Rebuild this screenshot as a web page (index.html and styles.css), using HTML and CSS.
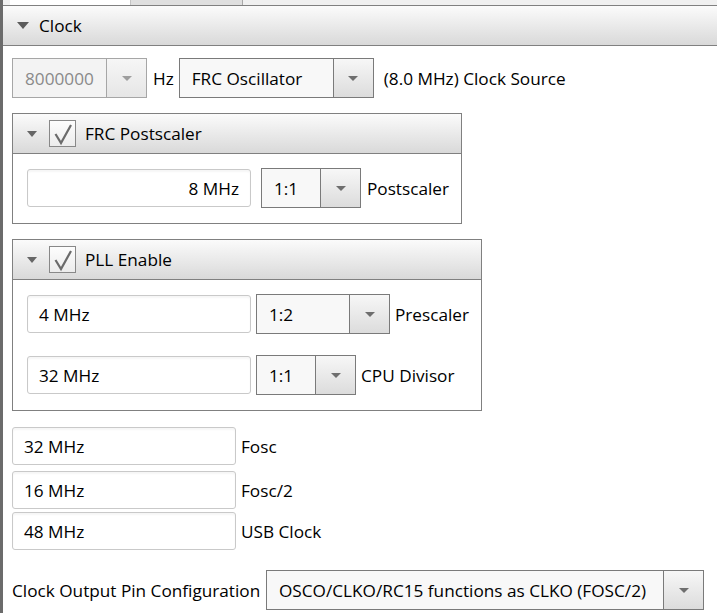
FILE: index.html
```html
<!DOCTYPE html>
<html>
<head>
<meta charset="utf-8">
<link rel="stylesheet" href="styles.css">
</head>
<body>
<div class="app">
  <div class="tabs">
    <div class="tab tab-active"></div>
    <div class="tab tab-inactive"></div>
  </div>
  <div class="section-head">
    <span class="tri tri-lg"></span>
    <span class="head-title">Clock</span>
  </div>
  <div class="content">
    <div class="row row-first">
      <div class="combo combo-disabled cw-135">
        <span class="combo-text">8000000</span>
        <span class="combo-btn"><span class="arrow"></span></span>
      </div>
      <span class="label ml-6">Hz</span>
      <div class="combo cw-195 ml-5">
        <span class="combo-text">FRC Oscillator</span>
        <span class="combo-btn"><span class="arrow"></span></span>
      </div>
      <span class="label ml-10">(8.0 MHz) Clock Source</span>
    </div>

    <div class="panel panel-frc">
      <div class="panel-head">
        <span class="tri tri-sm"></span>
        <span class="check"><svg width="27" height="27" viewBox="0 0 27 27"><path d="M6.5 14 L12 23 L22 5" fill="none" stroke="#6b6b6b" stroke-width="2.2"/></svg></span>
        <span class="panel-title">FRC Postscaler</span>
      </div>
      <div class="panel-body">
        <div class="row">
          <div class="field field-right">8 MHz</div>
          <div class="combo cw-100 ml-10">
            <span class="combo-text">1:1</span>
            <span class="combo-btn"><span class="arrow"></span></span>
          </div>
          <span class="label ml-6">Postscaler</span>
        </div>
      </div>
    </div>

    <div class="panel panel-pll">
      <div class="panel-head">
        <span class="tri tri-sm"></span>
        <span class="check"><svg width="27" height="27" viewBox="0 0 27 27"><path d="M6.5 14 L12 23 L22 5" fill="none" stroke="#6b6b6b" stroke-width="2.2"/></svg></span>
        <span class="panel-title">PLL Enable</span>
      </div>
      <div class="panel-body">
        <div class="row">
          <div class="field">4 MHz</div>
          <div class="combo cw-134 ml-5">
            <span class="combo-text">1:2</span>
            <span class="combo-btn"><span class="arrow"></span></span>
          </div>
          <span class="label ml-5">Prescaler</span>
        </div>
        <div class="row row-second">
          <div class="field">32 MHz</div>
          <div class="combo cw-100 ml-5">
            <span class="combo-text">1:1</span>
            <span class="combo-btn"><span class="arrow"></span></span>
          </div>
          <span class="label ml-5">CPU Divisor</span>
        </div>
      </div>
    </div>

    <div class="outputs">
      <div class="row out-row">
        <div class="field">32 MHz</div>
        <span class="label ml-5">Fosc</span>
      </div>
      <div class="row out-row out-row-2">
        <div class="field">16 MHz</div>
        <span class="label ml-5">Fosc/2</span>
      </div>
      <div class="row out-row out-row-3">
        <div class="field">48 MHz</div>
        <span class="label ml-5">USB Clock</span>
      </div>
    </div>

    <div class="row row-last">
      <span class="label label-pin">Clock Output Pin Configuration</span>
      <div class="combo cw-438">
        <span class="combo-text">OSCO/CLKO/RC15 functions as CLKO (FOSC/2)</span>
        <span class="combo-btn"><span class="arrow"></span></span>
      </div>
    </div>
  </div>
</div>
</body>
</html>
```
FILE: styles.css
```css
html, body {
  margin: 0;
  padding: 0;
  background: #ffffff;
  overflow: hidden;
}

.app {
  box-sizing: border-box;
  min-height: 613px;
  border-left: 3px solid #6b6b6b;
  font-family: "Open Sans", "Noto Sans", sans-serif;
  font-size: 17.2px;
  color: #000;
}

.tabs {
  display: flex;
  height: 5px;
  background: #f0f0f0;
}
.tab-active {
  margin-left: 7px;
  width: 120px;
  background: #ffffff;
  border-right: 1px solid #c4c4c4;
}
.tab-inactive {
  width: 111px;
  background: #dfdfdf;
  border-right: 1px solid #a8a8a8;
}

.section-head {
  display: flex;
  align-items: center;
  height: 39px;
  padding-left: 14px;
  border-top: 1px solid #808080;
  border-bottom: 1px solid #808080;
  background: linear-gradient(#fbfbfb, #d9d9d9);
}
.head-title {
  margin-left: 10px;
}

.tri {
  display: inline-block;
  width: 0;
  height: 0;
}
.tri-lg {
  border-left: 6px solid transparent;
  border-right: 6px solid transparent;
  border-top: 7px solid #5c5c5c;
}
.tri-sm {
  border-left: 5px solid transparent;
  border-right: 5px solid transparent;
  border-top: 6px solid #666;
}

.content {
  padding: 12px 0 0 9px;
}

.row {
  display: flex;
  align-items: center;
}
.row-first {
  height: 40px;
}

.label {
  white-space: nowrap;
}
.ml-5 { margin-left: 5px; }
.ml-6 { margin-left: 6px; }
.ml-10 { margin-left: 10px; }

.combo {
  box-sizing: border-box;
  display: flex;
  height: 40px;
  border: 1px solid #7a7a7a;
  background: #f8f8f8;
}
.combo-text {
  flex: 1;
  display: flex;
  align-items: center;
  padding-left: 12px;
  white-space: nowrap;
}
.combo-btn {
  box-sizing: border-box;
  width: 40px;
  display: flex;
  align-items: center;
  justify-content: center;
  border-left: 1px solid #7a7a7a;
  background: linear-gradient(#f7f7f7, #dcdcdc);
}
.arrow {
  width: 0;
  height: 0;
  border-left: 5px solid transparent;
  border-right: 5px solid transparent;
  border-top: 5px solid #6e6e6e;
}
.combo-disabled {
  border-color: #a6a6a6;
  background: #f3f3f3;
  color: #8a8a8a;
}
.combo-disabled .combo-btn {
  border-left-color: #a6a6a6;
  background: linear-gradient(#f6f6f6, #e6e6e6);
}
.combo-disabled .arrow {
  border-top-color: #9e9e9e;
}

.cw-100 { width: 100px; }
.cw-134 { width: 134px; }
.cw-135 { width: 135px; }
.cw-195 { width: 195px; }
.cw-438 { width: 438px; }

.field {
  box-sizing: border-box;
  width: 224px;
  height: 38px;
  display: flex;
  align-items: center;
  padding: 0 11px;
  border: 1px solid #c9c9c9;
  border-radius: 3px;
  background: #ffffff;
  box-shadow: inset 0 2px 2px rgba(0, 0, 0, 0.04);
  white-space: nowrap;
}
.field-right {
  justify-content: flex-end;
}

.panel {
  box-sizing: border-box;
  margin-top: 15px;
  border: 1px solid #808080;
}
.panel-frc { width: 450px; }
.panel-pll { width: 470px; }

.panel-head {
  display: flex;
  align-items: center;
  height: 39px;
  padding-left: 14px;
  border-bottom: 1px solid #808080;
  background: linear-gradient(#fbfbfb, #d9d9d9);
}
.check {
  box-sizing: border-box;
  width: 27px;
  height: 27px;
  margin-left: 12px;
  border: 1px solid #888;
  background: linear-gradient(#fdfdfd, #ececec);
  position: relative;
}
.check svg {
  position: absolute;
  left: -1px;
  top: -1px;
}
.panel-title {
  margin-left: 9px;
}

.panel-body {
  padding: 14px 0 15px 14px;
}
.panel-body .row {
  height: 40px;
}
.row-second {
  margin-top: 21px;
}

.outputs {
  margin-top: 16px;
}
.out-row {
  height: 38px;
}
.out-row-2 {
  margin-top: 6px;
}
.out-row-3 {
  margin-top: 3px;
}

.row-last {
  margin-top: 20px;
  height: 40px;
}
.label-pin {
  width: 254px;
}
```
